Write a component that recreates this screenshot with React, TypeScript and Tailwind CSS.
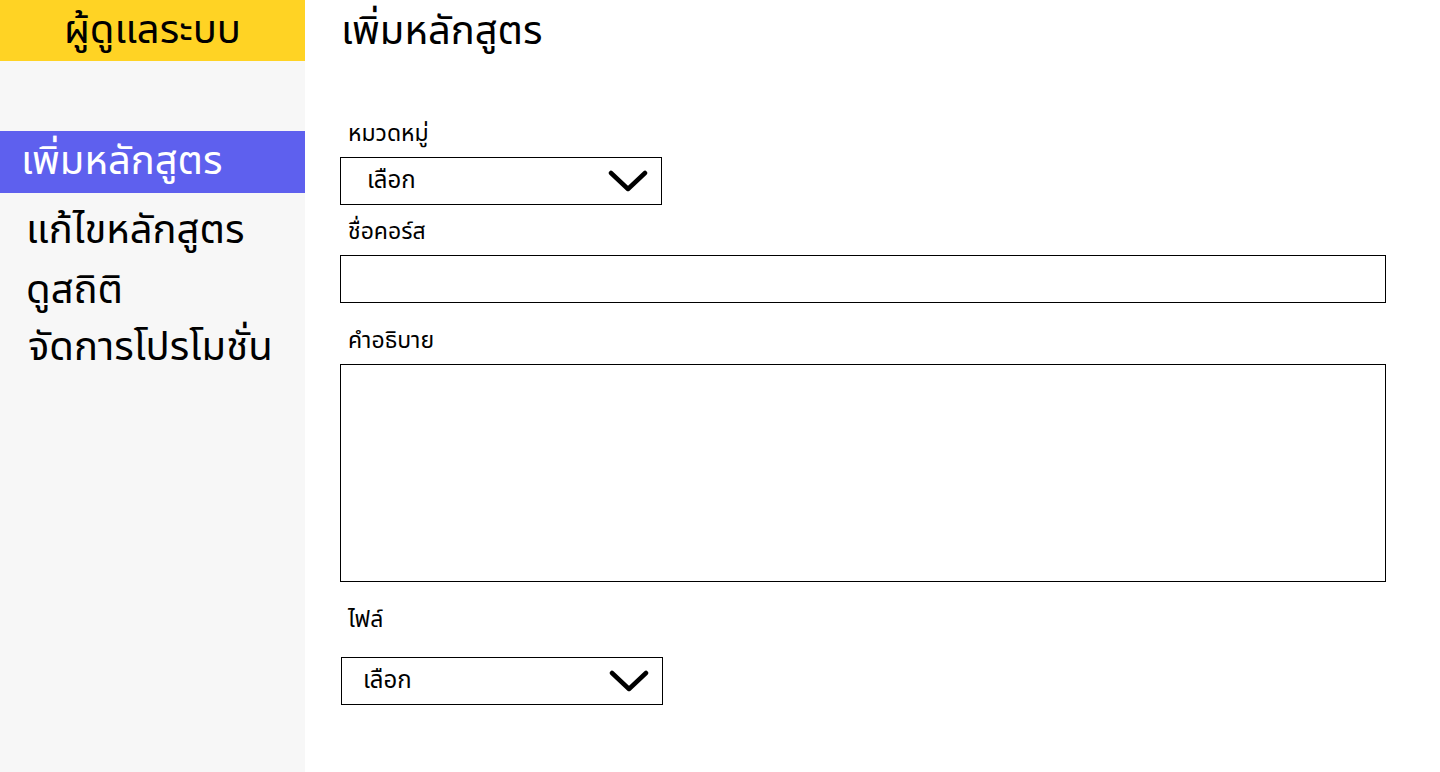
function Chevron() {
  return (
    <svg width="40" height="24" viewBox="0 0 40 24" fill="none" className="shrink-0">
      <path d="M3 4 L20 20 L37 4" stroke="#000" strokeWidth="4.5" strokeLinecap="round" strokeLinejoin="round" />
    </svg>
  );
}

function SelectBox({ textPad }: { textPad: string }) {
  return (
    <div className="flex h-[48px] w-[322px] items-center justify-between border border-black bg-white pr-[13px]">
      <span className={`${textPad} text-[24px] leading-none text-black`}>เลือก</span>
      <Chevron />
    </div>
  );
}

export default function App() {
  const font = { fontFamily: '"Noto Sans Thai", "Noto Sans Thai UI", "Noto Sans", sans-serif' };
  return (
    <div className="flex min-h-screen bg-white" style={font}>
      <aside className="flex w-[305px] shrink-0 flex-col bg-[#f7f7f7]">
        <div className="flex h-[61px] items-center justify-center bg-[#ffd324]">
          <span className="text-[40px] leading-none text-black">ผู้ดูแลระบบ</span>
        </div>
        <nav className="mt-[70px] flex flex-col">
          <div className="flex h-[62px] items-center bg-[#5e60ee] pl-[21px] text-[40px] leading-none text-white">
            เพิ่มหลักสูตร
          </div>
          <div className="flex h-[66px] items-center pl-[26px] pt-[10px] text-[40px] leading-none text-black">แก้ไขหลักสูตร</div>
          <div className="flex h-[58px] items-center pl-[26px] pt-[6px] text-[40px] leading-none text-black">ดูสถิติ</div>
          <div className="flex h-[58px] items-center pl-[28px] pt-[4px] text-[40px] leading-none text-black">จัดการโปรโมชั่น</div>
        </nav>
      </aside>

      <main className="flex flex-1 flex-col pl-[35px] pr-[54px]">
        <h1 className="flex h-[64px] items-center pl-px text-[40px] font-normal leading-none text-black">
          เพิ่มหลักสูตร
        </h1>

        <label className="mt-[52px] flex h-[36px] items-center pl-[8px] text-[23px] leading-none text-black">หมวดหมู่</label>
        <div className="mt-[5px]">
          <SelectBox textPad="pl-[26px]" />
        </div>

        <label className="mt-[9px] flex h-[36px] items-center pl-[8px] text-[23px] leading-none text-black">ชื่อคอร์ส</label>
        <div className="mt-[5px] h-[48px] w-full border border-black bg-white" />

        <label className="mt-[20px] flex h-[36px] items-center pl-[8px] text-[23px] leading-none text-black">คำอธิบาย</label>
        <div className="mt-[5px] h-[218px] w-full border border-black bg-white" />

        <label className="mt-[20px] flex h-[36px] items-center pl-[8px] text-[23px] leading-none text-black">ไฟล์</label>
        <div className="mt-[19px] pl-px">
          <SelectBox textPad="pl-[21px]" />
        </div>
      </main>
    </div>
  );
}
